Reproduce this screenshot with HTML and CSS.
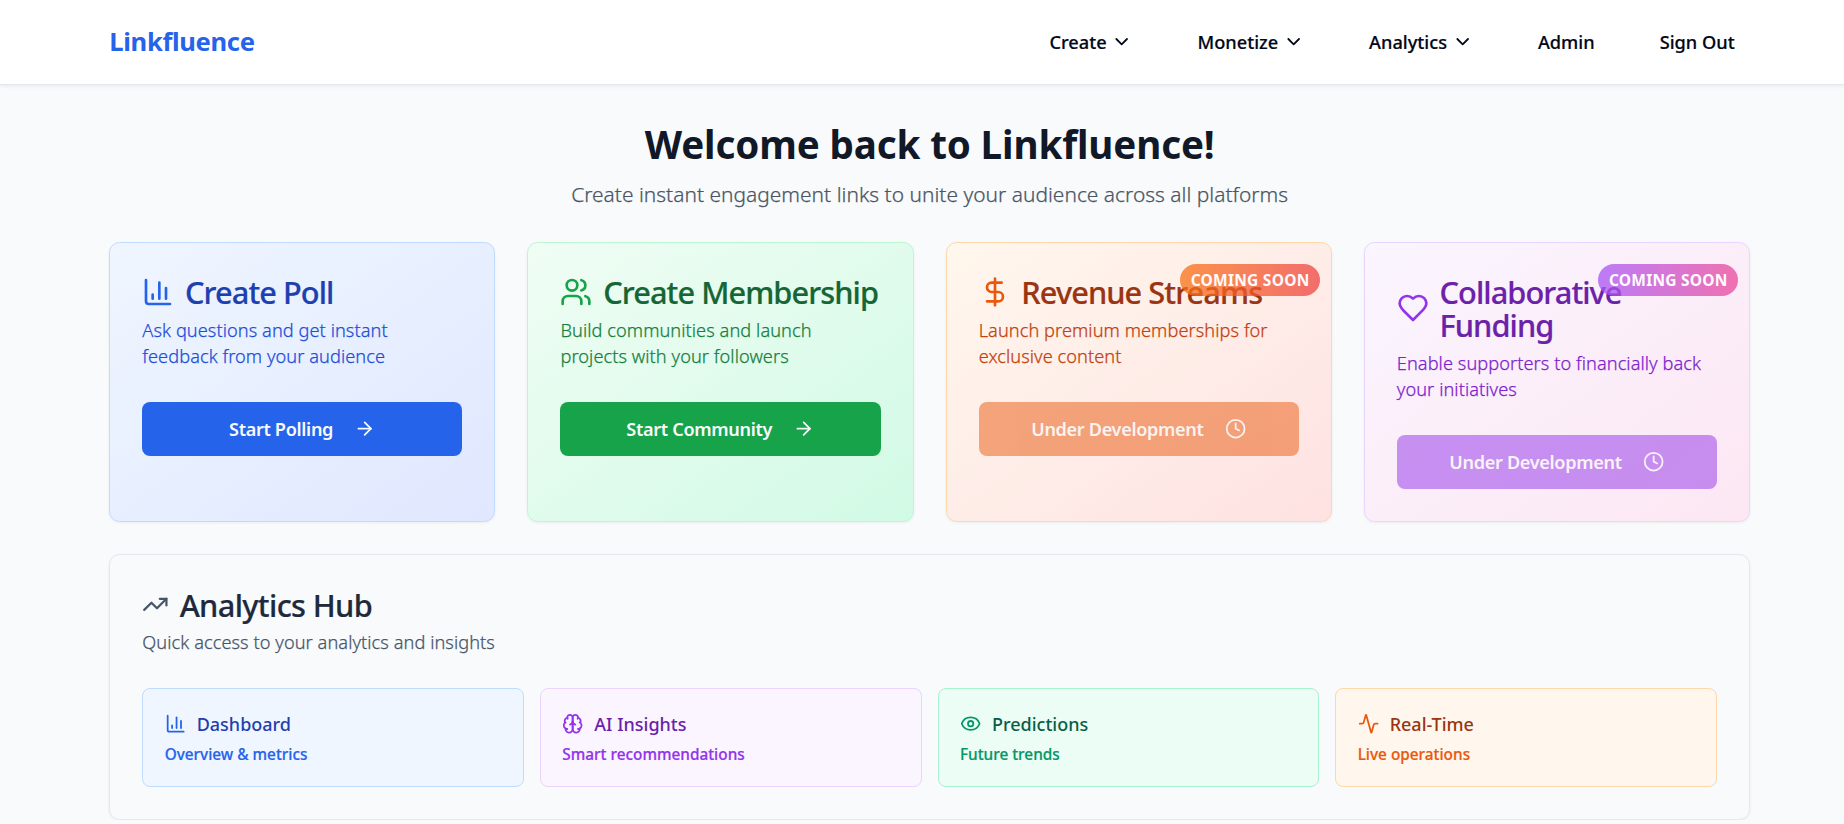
FILE: index.html
```
<!DOCTYPE html>
<html lang="en">
<head>
    <meta charset="UTF-8">
    <meta name="viewport" content="width=device-width, initial-scale=1.0">
    <title>Linkfluence</title>
    <link rel="stylesheet" href="styles.css">
</head>
<body>
    <header class="header">
        <div class="container header-inner">
            <a class="logo">Linkfluence</a>
            <nav class="nav">
                <a class="nav-link">Create <svg class="icon" viewBox="0 0 24 24"><path d="m6 9 6 6 6-6"/></svg></a>
                <a class="nav-link">Monetize <svg class="icon" viewBox="0 0 24 24"><path d="m6 9 6 6 6-6"/></svg></a>
                <a class="nav-link">Analytics <svg class="icon" viewBox="0 0 24 24"><path d="m6 9 6 6 6-6"/></svg></a>
                <a class="nav-link">Admin</a>
                <a class="nav-link">Sign Out</a>
            </nav>
        </div>
    </header>

    <main class="container">
        <div class="welcome">
            <h1>Welcome back to Linkfluence!</h1>
            <p>Create instant engagement links to unite your audience across all platforms</p>
        </div>

        <div class="feature-grid">
            <!-- Create Poll -->
            <div class="card card-blue">
                <h2 class="card-title">
                    <svg class="icon" viewBox="0 0 24 24"><path d="M3 3v16a2 2 0 0 0 2 2h16"/><path d="M18 17V9"/><path d="M13 17V5"/><path d="M8 17v-3"/></svg>
                    <span>Create Poll</span>
                </h2>
                <p class="card-text">Ask questions and get instant<br>feedback from your audience</p>
                <button class="card-button">Start Polling <svg class="icon" viewBox="0 0 24 24"><path d="M5 12h14"/><path d="m12 5 7 7-7 7"/></svg></button>
            </div>

            <!-- Create Membership -->
            <div class="card card-green">
                <h2 class="card-title">
                    <svg class="icon" viewBox="0 0 24 24"><path d="M16 21v-2a4 4 0 0 0-4-4H6a4 4 0 0 0-4 4v2"/><circle cx="9" cy="7" r="4"/><path d="M22 21v-2a4 4 0 0 0-3-3.87"/><path d="M16 3.13a4 4 0 0 1 0 7.75"/></svg>
                    <span>Create Membership</span>
                </h2>
                <p class="card-text">Build communities and launch<br>projects with your followers</p>
                <button class="card-button">Start Community <svg class="icon" viewBox="0 0 24 24"><path d="M5 12h14"/><path d="m12 5 7 7-7 7"/></svg></button>
            </div>

            <!-- Revenue Streams -->
            <div class="card card-orange">
                <h2 class="card-title">
                    <svg class="icon" viewBox="0 0 24 24"><path d="M12 2v20"/><path d="M17 5H9.5a3.5 3.5 0 0 0 0 7h5a3.5 3.5 0 0 1 0 7H6"/></svg>
                    <span>Revenue Streams</span>
                </h2>
                <p class="card-text">Launch premium memberships for<br>exclusive content</p>
                <button class="card-button" disabled>Under Development <svg class="icon" viewBox="0 0 24 24"><circle cx="12" cy="12" r="10"/><path d="M12 6v6l4 2"/></svg></button>
                <span class="badge">COMING SOON</span>
            </div>

            <!-- Collaborative Funding -->
            <div class="card card-purple">
                <h2 class="card-title">
                    <svg class="icon" viewBox="0 0 24 24"><path d="M19 14c1.49-1.46 3-3.21 3-5.5A5.5 5.5 0 0 0 16.5 3c-1.76 0-3 .5-4.5 2-1.5-1.5-2.74-2-4.5-2A5.5 5.5 0 0 0 2 8.5c0 2.3 1.5 4.05 3 5.5l7 7Z"/></svg>
                    <span>Collaborative<br>Funding</span>
                </h2>
                <p class="card-text">Enable supporters to financially back<br>your initiatives</p>
                <button class="card-button" disabled>Under Development <svg class="icon" viewBox="0 0 24 24"><circle cx="12" cy="12" r="10"/><path d="M12 6v6l4 2"/></svg></button>
                <span class="badge">COMING SOON</span>
            </div>
        </div>

        <section class="hub">
            <h2 class="card-title hub-title">
                <svg class="icon" viewBox="0 0 24 24"><path d="M22 7 13.5 15.5 8.5 10.5 2 17"/><path d="M16 7h6v6"/></svg>
                <span>Analytics Hub</span>
            </h2>
            <p class="hub-text">Quick access to your analytics and insights</p>

            <div class="hub-grid">
                <a class="tile tile-blue">
                    <div class="tile-title">
                        <svg class="icon" viewBox="0 0 24 24"><path d="M3 3v16a2 2 0 0 0 2 2h16"/><path d="M18 17V9"/><path d="M13 17V5"/><path d="M8 17v-3"/></svg>
                        <span>Dashboard</span>
                    </div>
                    <div class="tile-text">Overview &amp; metrics</div>
                </a>
                <a class="tile tile-purple">
                    <div class="tile-title">
                        <svg class="icon" viewBox="0 0 24 24"><path d="M12 5a3 3 0 1 0-5.997.125 4 4 0 0 0-2.526 5.77 4 4 0 0 0 .556 6.588A4 4 0 1 0 12 18Z"/><path d="M12 5a3 3 0 1 1 5.997.125 4 4 0 0 1 2.526 5.77 4 4 0 0 1-.556 6.588A4 4 0 1 1 12 18Z"/><path d="M15 13a4.5 4.5 0 0 1-3-4 4.5 4.5 0 0 1-3 4"/><path d="M17.599 6.5a3 3 0 0 0 .399-1.375"/><path d="M6.003 5.125A3 3 0 0 0 6.401 6.5"/><path d="M3.477 10.896a4 4 0 0 1 .585-.396"/><path d="M19.938 10.5a4 4 0 0 1 .585.396"/><path d="M6 18a4 4 0 0 1-1.967-.516"/><path d="M19.967 17.484A4 4 0 0 1 18 18"/></svg>
                        <span>AI Insights</span>
                    </div>
                    <div class="tile-text">Smart recommendations</div>
                </a>
                <a class="tile tile-emerald">
                    <div class="tile-title">
                        <svg class="icon" viewBox="0 0 24 24"><path d="M2.062 12.348a1 1 0 0 1 0-.696 10.75 10.75 0 0 1 19.876 0 1 1 0 0 1 0 .696 10.75 10.75 0 0 1-19.876 0"/><circle cx="12" cy="12" r="3"/></svg>
                        <span>Predictions</span>
                    </div>
                    <div class="tile-text">Future trends</div>
                </a>
                <a class="tile tile-orange">
                    <div class="tile-title">
                        <svg class="icon" viewBox="0 0 24 24"><path d="M22 12h-2.48a2 2 0 0 0-1.93 1.46l-2.35 8.36a.25.25 0 0 1-.48 0L9.24 2.18a.25.25 0 0 0-.48 0l-2.35 8.36A2 2 0 0 1 4.49 12H2"/></svg>
                        <span>Real-Time</span>
                    </div>
                    <div class="tile-text">Live operations</div>
                </a>
            </div>
        </section>
    </main>
</body>
</html>
```
FILE: styles.css
```
* {
    box-sizing: border-box;
}

html {
    overflow: hidden;
}

body {
    margin: 0;
    background: #f8fafc;
    color: #020817;
    font-family: "Noto Sans", sans-serif;
}

h1, h2, p {
    margin: 0;
}

.container {
    width: 1640.67px;
    margin-left: 109.33px;
}

.icon {
    flex-shrink: 0;
    width: 21.33px;
    height: 21.33px;
    fill: none;
    stroke: currentColor;
    stroke-width: 2;
    stroke-linecap: round;
    stroke-linejoin: round;
}

/* Header */
.header {
    background: #ffffff;
    border-bottom: 1px solid #e2e8f0;
    box-shadow: 0 1px 4px rgba(0, 0, 0, 0.08);
}

.header-inner {
    display: flex;
    justify-content: space-between;
    align-items: center;
    height: 84px;
}

.logo {
    padding-bottom: 2px;
    color: #2563eb;
    font-size: 25.6px;
    font-weight: 700;
    letter-spacing: -0.0134em;
}

.nav {
    display: flex;
    gap: 65px;
    padding-right: 15.4px;
}

.nav-link {
    display: flex;
    align-items: center;
    gap: 4.6px;
    font-size: 18.2px;
    font-weight: 500;
    line-height: 26.67px;
    -webkit-text-stroke: 0.2px currentColor;
}

.nav-link .icon {
    margin-top: -1px;
}

/* Welcome */
.welcome {
    padding: 32px 0 31px;
    text-align: center;
}

.welcome h1 {
    color: #111827;
    font-size: 38.6px;
    font-weight: 700;
    line-height: 54px;
    letter-spacing: -0.0034em;
}

.welcome p {
    margin-top: 7px;
    margin-bottom: 1px;
    color: #4b5563;
    font-size: 20.9px;
    font-weight: 300;
    line-height: 32px;
    letter-spacing: 0.001em;
    -webkit-text-stroke: 0.25px currentColor;
}

/* Feature cards */
.feature-grid {
    display: grid;
    grid-template-columns: repeat(4, 1fr);
    gap: 32px;
}

.card {
    position: relative;
    padding: 32px;
    border: 1px solid;
    border-radius: 10.67px;
    box-shadow: 0 1px 3px rgba(0, 0, 0, 0.06);
}

.card-title {
    display: flex;
    align-items: center;
    gap: 10.67px;
    font-size: 30.72px;
    font-weight: 500;
    line-height: 33px;
    letter-spacing: -0.03em;
    white-space: nowrap;
    -webkit-text-stroke: 0.2px currentColor;
}

.card-title .icon {
    width: 32px;
    height: 32px;
}

.card-title span {
    padding-top: 1px;
    margin-bottom: -1px;
}

.card-text {
    margin-top: 8.67px;
    font-size: 18.2px;
    font-weight: 300;
    line-height: 26.67px;
    letter-spacing: 0.0035em;
    white-space: nowrap;
    -webkit-text-stroke: 0.25px currentColor;
}

.card-button {
    display: flex;
    justify-content: center;
    align-items: center;
    gap: 21.33px;
    width: 100%;
    height: 54px;
    margin-top: 32px;
    border: none;
    border-radius: 8px;
    color: #f8fafc;
    font-family: inherit;
    font-size: 18.1px;
    font-weight: 600;
    letter-spacing: -0.018em;
}

.card-button:disabled {
    opacity: 0.5;
}

.badge {
    position: absolute;
    top: 21.33px;
    right: 10.67px;
    padding: 5.33px 10.67px;
    border-radius: 16px;
    opacity: 0.75;
    color: #ffffff;
    font-size: 15.5px;
    font-weight: 700;
    line-height: 21.33px;
    letter-spacing: 0.016em;
}

.card-blue {
    background: linear-gradient(to bottom right, #eff6ff, #e0e7ff);
    border-color: #bfdbfe;
}

.card-blue .card-title { color: #1e40af; }
.card-blue .card-title .icon { color: #2563eb; }
.card-blue .card-text { color: #1d4ed8; }
.card-blue .card-button { background: #2563eb; }

.card-green {
    background: linear-gradient(to bottom right, #f0fdf4, #d1fae5);
    border-color: #bbf7d0;
}

.card-green .card-title { color: #166534; }
.card-green .card-title .icon { color: #16a34a; }
.card-green .card-text { color: #15803d; }
.card-green .card-button { background: #16a34a; }

.card-orange {
    background: linear-gradient(to bottom right, #fff7ed, #fee2e2);
    border-color: #fed7aa;
}

.card-orange .card-title { color: #9a3412; }
.card-orange .card-title .icon { color: #ea580c; }
.card-orange .card-text { color: #c2410c; }
.card-orange .card-button { background: #ea580c; }
.card-orange .badge { background: linear-gradient(to right, #f97316, #ef4444); }

.card-purple {
    background: linear-gradient(to bottom right, #faf5ff, #fce7f3);
    border-color: #e9d5ff;
}

.card-purple .card-title { color: #6b21a8; }
.card-purple .card-title .icon { color: #9333ea; }
.card-purple .card-text { color: #7e22ce; }
.card-purple .card-button { background: #9333ea; }
.card-purple .badge { background: linear-gradient(to right, #a855f7, #ec4899); }

/* Analytics hub */
.hub {
    margin-top: 32px;
    padding: 32px;
    border: 1px solid #e2e8f0;
    border-radius: 10.67px;
    box-shadow: 0 1px 3px rgba(0, 0, 0, 0.06);
}

.hub-title {
    color: #1e293b;
    line-height: 34px;
    letter-spacing: -0.0211em;
}

.hub-title .icon {
    width: 26.67px;
    height: 26.67px;
    color: #475569;
}

.hub-text {
    margin-top: 8.33px;
    color: #475569;
    font-size: 18.2px;
    font-weight: 300;
    line-height: 26.67px;
    letter-spacing: 0.0035em;
    -webkit-text-stroke: 0.25px currentColor;
}

.hub-grid {
    display: grid;
    grid-template-columns: repeat(4, 1fr);
    gap: 16px;
    margin-top: 32px;
}

.tile {
    padding: 21.33px 21.33px 20px;
    border: 1px solid;
    border-radius: 8px;
}

.tile-title {
    display: flex;
    align-items: center;
    gap: 10.67px;
    font-size: 18px;
    font-weight: 500;
    line-height: 26.67px;
}

.tile-title span {
    padding-top: 1px;
    margin-bottom: -1px;
}

.tile-text {
    margin-top: 7.33px;
    font-size: 15.36px;
    font-weight: 500;
    line-height: 21.33px;
    -webkit-text-stroke: 0.2px currentColor;
}

.tile-blue { background: #eff6ff; border-color: #bfdbfe; color: #2563eb; }
.tile-blue .tile-title span { color: #1e40af; }

.tile-purple { background: #faf5ff; border-color: #e9d5ff; color: #9333ea; }
.tile-purple .tile-title span { color: #6b21a8; }

.tile-emerald { background: #ecfdf5; border-color: #a7f3d0; color: #059669; }
.tile-emerald .tile-title span { color: #065f46; }

.tile-orange { background: #fff7ed; border-color: #fed7aa; color: #ea580c; }
.tile-orange .tile-title span { color: #9a3412; }
```
